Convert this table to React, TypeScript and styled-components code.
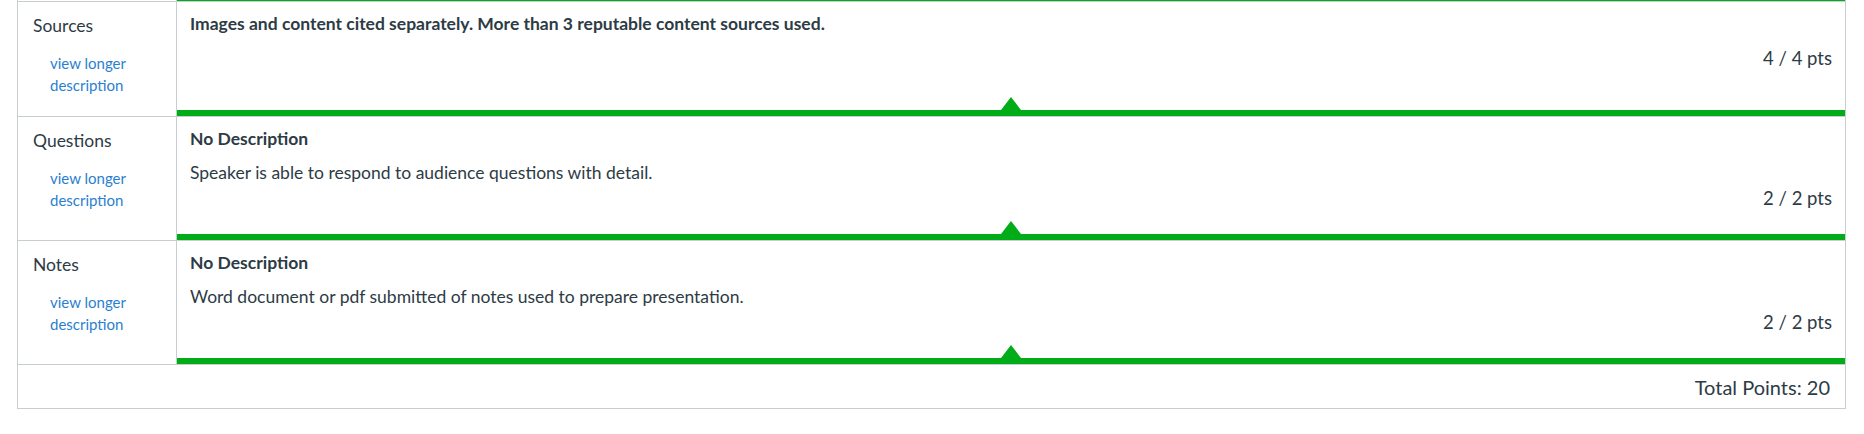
import React from "react";
import styled, { createGlobalStyle } from "styled-components";

const GREEN = "#00AC18";
const LINE = "#C7CDD1";
const INK = "#2D3B45";

const Global = createGlobalStyle`
  html, body { margin: 0; padding: 0; background: #fff; }
  body { font-family: Lato, "Noto Sans", sans-serif; color: ${INK}; }
`;

const Page = styled.div`
  padding: 0 18px 0 17px;
`;

const Rubric = styled.div`
  border-left: 1px solid ${LINE};
  border-right: 1px solid ${LINE};
  border-bottom: 1px solid ${LINE};
`;

const Row = styled.div`
  display: grid;
  grid-template-columns: 159px 1fr;
  border-bottom: 1px solid ${LINE};
`;

const TailRow = styled(Row)`
  height: 1px;
`;

const TailLeft = styled.div`
  border-right: 1px solid ${LINE};
`;

const TailRight = styled.div`
  background: ${GREEN};
`;

const Criterion = styled.div`
  border-right: 1px solid ${LINE};
  padding: 10px 15px 20px 15px;
  display: flex;
  flex-direction: column;
  align-items: flex-start;
`;

const CriterionName = styled.div`
  font-size: 17.5px;
  line-height: 27px;
`;

const LongLink = styled.a`
  margin: 13px 0 0 17px;
  font-size: 15px;
  line-height: 22px;
  color: #2B7FD0;
  text-decoration: none;
  cursor: pointer;
`;

const Rating = styled.div`
  position: relative;
  display: flex;
  flex-direction: column;
  padding: 8px 13px 25px 13px;
  border-bottom: 6px solid ${GREEN};

  &::after {
    content: "";
    position: absolute;
    left: 50%;
    bottom: 0;
    transform: translateX(-50%);
    border-left: 10px solid transparent;
    border-right: 10px solid transparent;
    border-bottom: 13px solid ${GREEN};
  }
`;

const RatingTitle = styled.div`
  font-size: 17.5px;
  line-height: 27px;
  font-weight: 700;
  margin-bottom: 10px;
`;

const RatingDesc = styled.div`
  font-size: 17.5px;
  line-height: 22px;
  margin-bottom: 3px;
`;

const Points = styled.div`
  font-size: 18.5px;
  line-height: 22px;
  text-align: right;
`;

const Footer = styled.div`
  display: flex;
  justify-content: flex-end;
  padding: 7px 15px 6px 15px;
  font-size: 20px;
  line-height: 30px;
`;

type Crit = {
  name: string;
  title: string;
  desc?: string;
  pts: string;
};

const criteria: Crit[] = [
  {
    name: "Sources",
    title:
      "Images and content cited separately. More than 3 reputable content sources used.",
    pts: "4 / 4 pts",
  },
  {
    name: "Questions",
    title: "No Description",
    desc: "Speaker is able to respond to audience questions with detail.",
    pts: "2 / 2 pts",
  },
  {
    name: "Notes",
    title: "No Description",
    desc: "Word document or pdf submitted of notes used to prepare presentation.",
    pts: "2 / 2 pts",
  },
];

export default function App() {
  return (
    <Page>
      <Global />
      <Rubric>
        <TailRow>
          <TailLeft />
          <TailRight />
        </TailRow>
        {criteria.map((c) => (
          <Row key={c.name}>
            <Criterion>
              <CriterionName>{c.name}</CriterionName>
              <LongLink>view longer description</LongLink>
            </Criterion>
            <Rating>
              <RatingTitle>{c.title}</RatingTitle>
              {c.desc && <RatingDesc>{c.desc}</RatingDesc>}
              <Points>{c.pts}</Points>
            </Rating>
          </Row>
        ))}
        <Footer>Total Points: 20</Footer>
      </Rubric>
    </Page>
  );
}
